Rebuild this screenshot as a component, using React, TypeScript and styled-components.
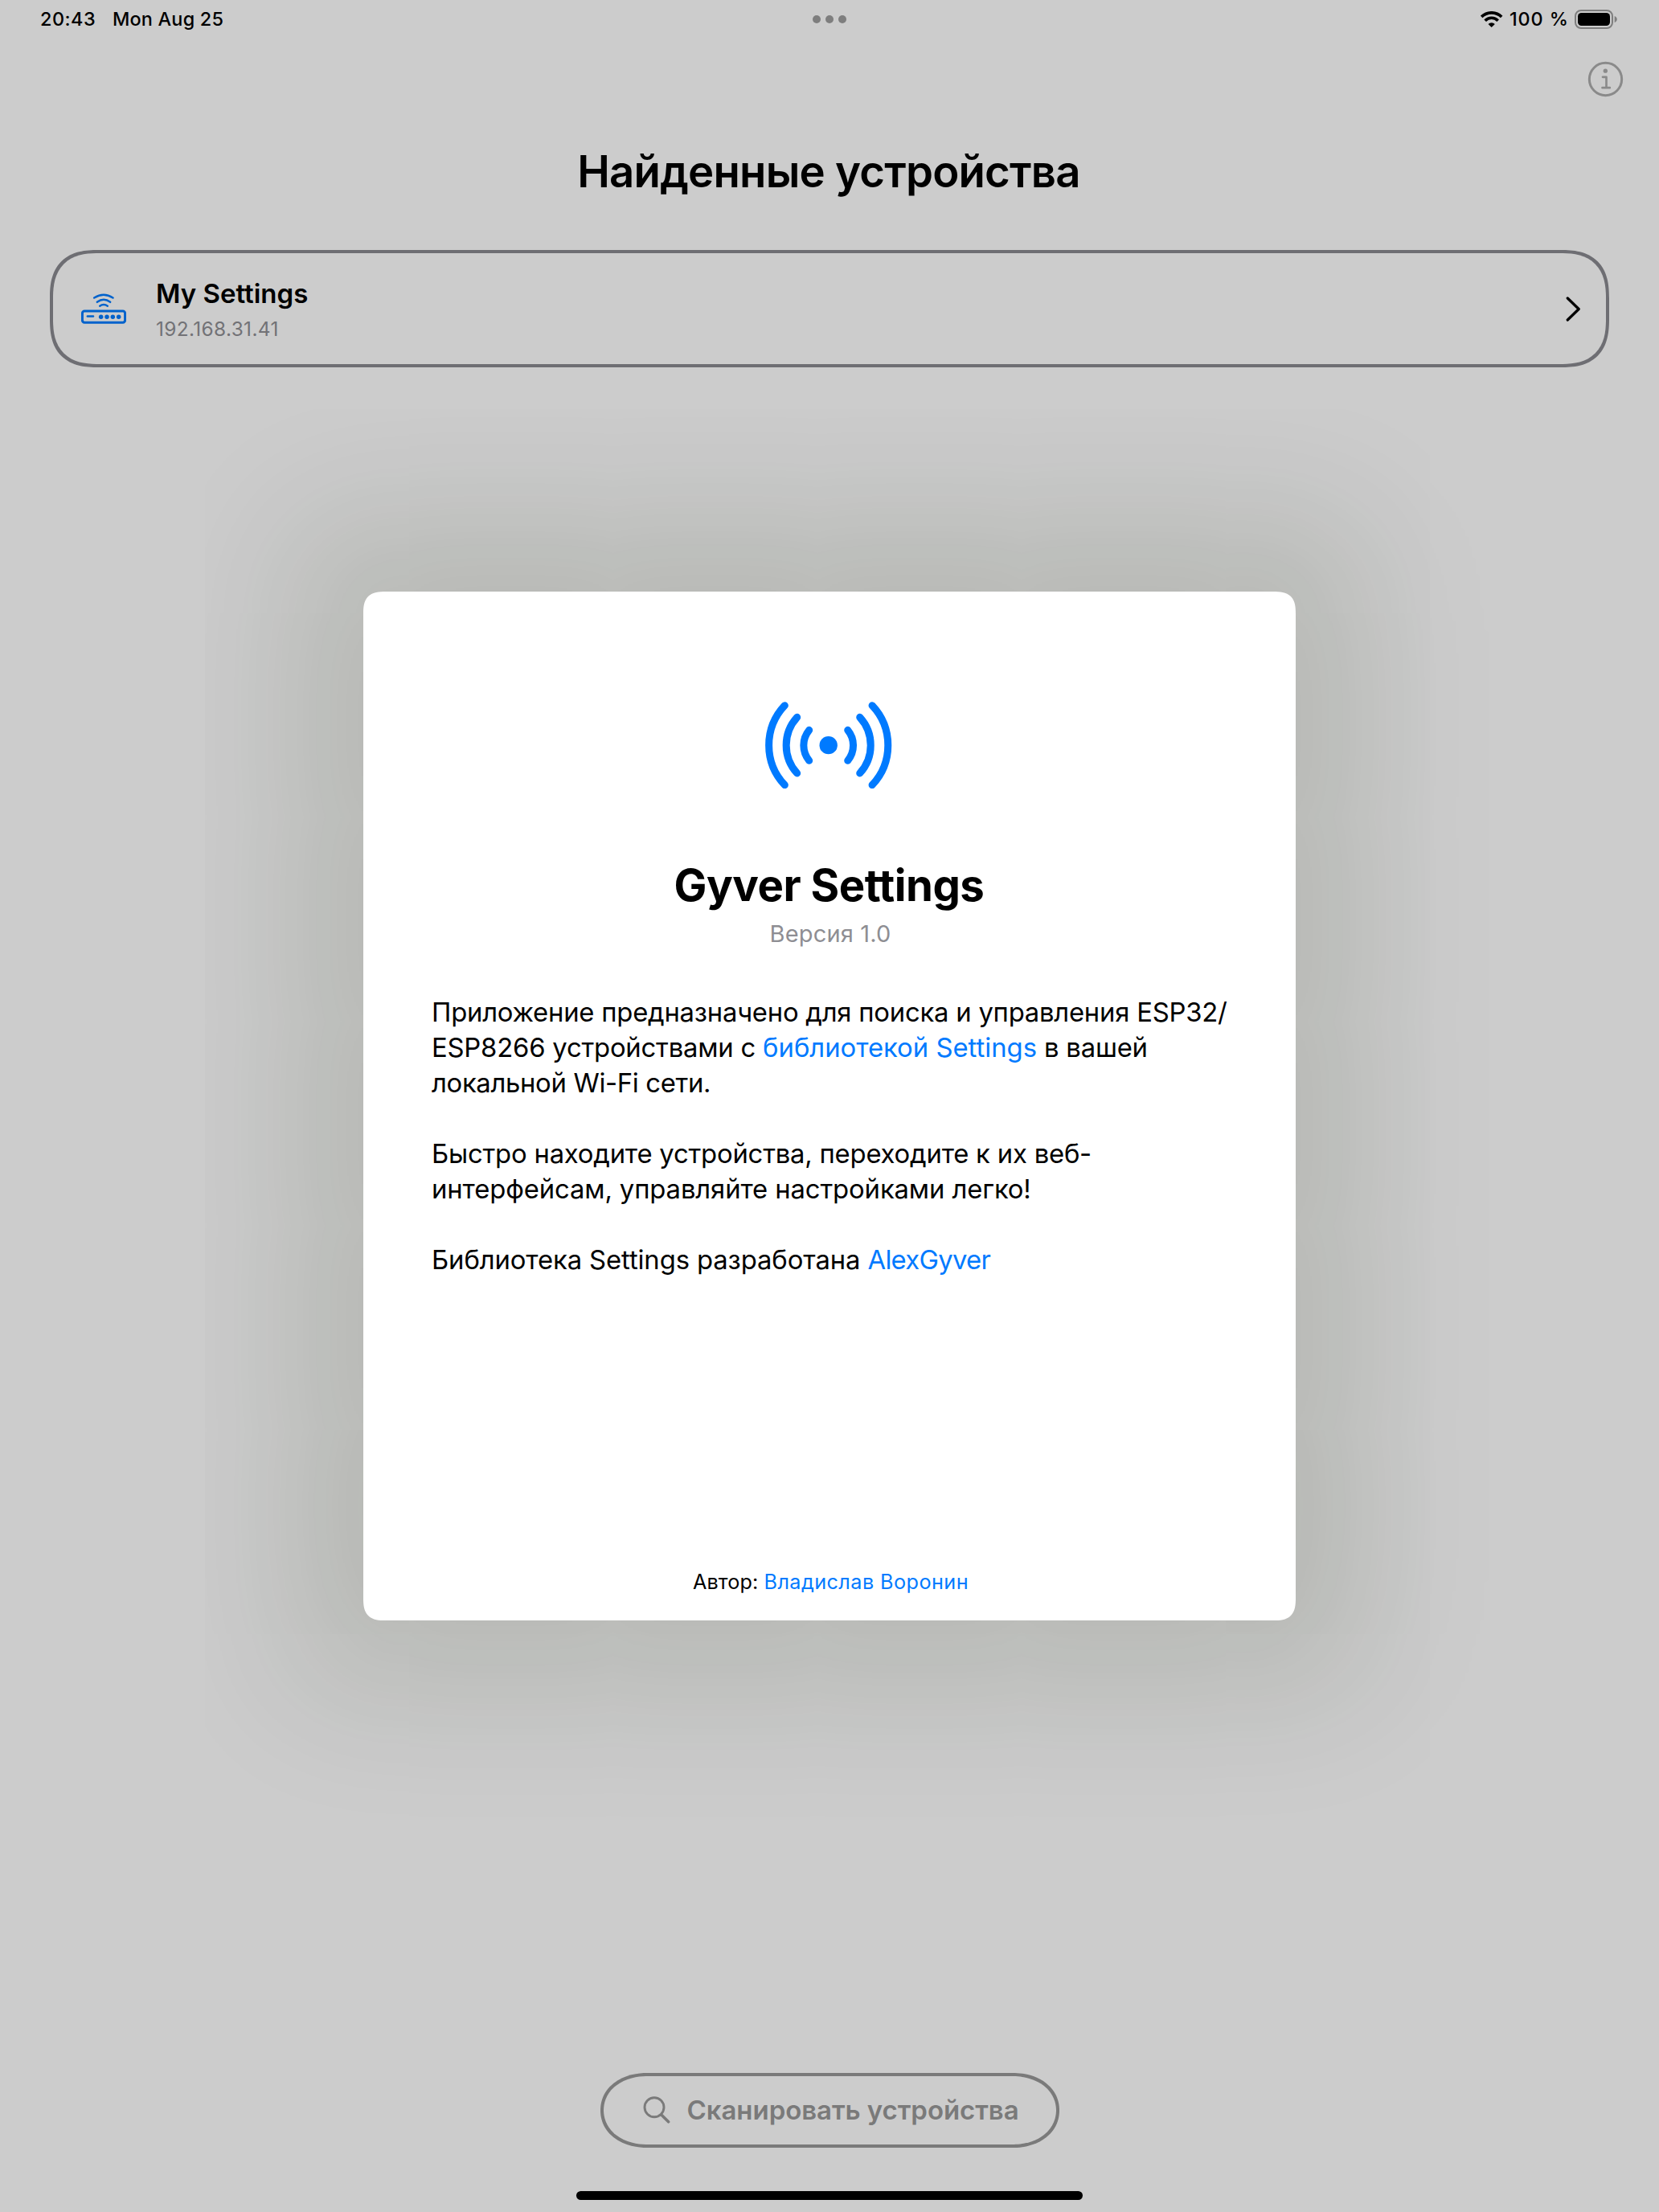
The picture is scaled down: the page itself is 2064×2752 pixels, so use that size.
import React from "react";
import styled, { createGlobalStyle } from "styled-components";

const GlobalStyle = createGlobalStyle`
  *, *::before, *::after { box-sizing: border-box; }
  body {
    margin: 0;
    background: #cccccc;
    font-family: Inter, Roboto, "Liberation Sans", sans-serif;
    color: #000;
  }
`;

const Screen = styled.div`
  position: relative;
  width: 2064px;
  height: 2752px;
  overflow: hidden;
  display: flex;
  flex-direction: column;
  background: #cccccc;
`;

/* ---------- status bar ---------- */

const StatusBar = styled.div`
  display: grid;
  grid-template-columns: 1fr auto 1fr;
  align-items: center;
  height: 48px;
  padding: 0 52px 0 50px;
  font-size: 23.4px;
  font-weight: 500;
  line-height: 30px;
`;

const StatusGroup = styled.div<{ $align: "start" | "end" }>`
  display: flex;
  align-items: center;
  justify-content: flex-${(p) => p.$align};
`;

const StatusText = styled.span<{ $width: number; $spacing: number }>`
  width: ${(p) => p.$width}px;
  letter-spacing: ${(p) => p.$spacing}px;
  white-space: nowrap;
`;

const WifiGlyph = styled.svg`
  width: 28px;
  height: 20px;
  margin-right: 8px;
`;

const BatteryGlyph = styled.svg`
  width: 53px;
  height: 24px;
`;

const MultitaskDots = styled.div`
  display: flex;
  gap: 6px;
  margin-left: 2px;
`;

const Dot = styled.i`
  width: 10px;
  height: 10px;
  border-radius: 50%;
  background: #7e7e7e;
`;

/* ---------- page ---------- */

const NavBar = styled.header`
  display: flex;
  justify-content: flex-end;
  height: 132px;
  padding: 28px 44px 0 0;
`;

const InfoButton = styled.button`
  display: flex;
  width: 45px;
  height: 45px;
  padding: 0;
  border: 0;
  background: none;
`;

const PageTitle = styled.h1`
  margin: 0 2px 65px 0;
  text-align: center;
  font-size: 54.5px;
  font-weight: 600;
  line-height: 66px;
  letter-spacing: -0.79px;
`;

const DeviceCard = styled.section`
  display: flex;
  align-items: center;
  height: 146px;
  margin: 0 62px;
  padding: 0 30px 0 35px;
  border: 4px solid #6e6e73;
  border-radius: 60px;
  corner-shape: superellipse(1.35);
`;

const RouterGlyph = styled.svg`
  width: 56px;
  height: 38px;
  margin-right: 37px;
`;

const DeviceText = styled.div`
  flex: 1;
  display: flex;
  flex-direction: column;
  gap: 7px;
  padding-top: 1px;
`;

const DeviceName = styled.div`
  font-size: 33px;
  font-weight: 600;
  line-height: 42px;
  letter-spacing: 0;
`;

const DeviceAddress = styled.div`
  font-size: 24.4px;
  line-height: 32px;
  letter-spacing: 0.36px;
  color: #727276;
`;

const ChevronGlyph = styled.svg`
  width: 20px;
  height: 32px;
`;

const Footer = styled.footer`
  flex: 1;
  display: flex;
  flex-direction: column;
  align-items: center;
  justify-content: flex-end;
  padding-bottom: 15px;
`;

const ScanButton = styled.button`
  display: flex;
  align-items: center;
  width: 571px;
  height: 93px;
  margin-bottom: 54px;
  padding: 0 0 1px 49px;
  border: 4px solid #7a7a7a;
  border-radius: 58px / 46.5px;
  corner-shape: superellipse(1.08);
  background: none;
  color: #7a7a7a;
  font-family: inherit;
  font-size: 33px;
  font-weight: 600;
  line-height: 42px;
  letter-spacing: -0.06px;
  white-space: nowrap;
`;

const SearchGlyph = styled.svg`
  flex: none;
  width: 34px;
  height: 34px;
  margin-right: 21px;
`;

const HomeIndicator = styled.div`
  width: 630px;
  height: 11px;
  border-radius: 6px;
  background: #000;
`;

/* ---------- about sheet ---------- */

const Overlay = styled.div`
  position: absolute;
  inset: 0;
  display: flex;
  align-items: center;
  justify-content: center;
`;

const Sheet = styled.article`
  display: flex;
  flex-direction: column;
  align-items: center;
  width: 1160px;
  height: 1280px;
  padding: 137px 82px 32px 85px;
  border-radius: 28px;
  corner-shape: superellipse(1.5);
  background: #fff;
  box-shadow: 0 0 180px 82px rgba(20, 37, 0, 0.125);
`;

const RadioGlyph = styled.svg`
  width: 157.4px;
  height: 108.4px;
  margin: 0 5px 86.6px 0;
`;

const SheetTitle = styled.h2`
  margin: 0 4px 10px 0;
  font-size: 54.5px;
  font-weight: 700;
  line-height: 66px;
  letter-spacing: -0.5px;
`;

const Version = styled.p`
  margin: 0 1px 57px 0;
  font-size: 29px;
  line-height: 36px;
  letter-spacing: 0.17px;
  color: #8e8e93;
`;

const Description = styled.div`
  align-self: stretch;
  display: flex;
  flex-direction: column;
  gap: 44px;
  font-size: 32.8px;
  line-height: 44px;
  white-space: nowrap;
`;

const Paragraph = styled.p`
  margin: 0;
`;

const Line = styled.span<{ $spacing: number }>`
  display: block;
  letter-spacing: ${(p) => p.$spacing}px;
`;

const Link = styled.a<{ $spacing: number }>`
  color: #007aff;
  letter-spacing: ${(p) => p.$spacing}px;
`;

const Author = styled.p`
  margin: auto 0 0;
  font-size: 25.2px;
  line-height: 32px;
  letter-spacing: 0.1px;
`;

function Wifi() {
  return (
    <WifiGlyph viewBox="175 42 84 60" fill="none" stroke="#000" strokeWidth="11">
      <path d="M178.5 63 A53 53 0 0 1 253.5 63" />
      <path d="M192 77 A33.5 33.5 0 0 1 240 77" />
      <path d="M216 102 L203.5 90 A17.5 17.5 0 0 1 228.5 90 Z" fill="#000" stroke="none" />
    </WifiGlyph>
  );
}

function Battery() {
  return (
    <BatteryGlyph viewBox="0 0 53 24" fill="none">
      <rect x="1" y="1" width="46" height="22" rx="7" stroke="#7e7e7e" strokeWidth="2" />
      <rect x="4" y="4" width="40" height="16" rx="4.5" fill="#000" />
      <path d="M49.7 8 C53.8 9.4 53.8 14.6 49.7 16 Z" fill="#7e7e7e" />
    </BatteryGlyph>
  );
}

function Info() {
  return (
    <svg width="45" height="45" viewBox="573 227.5 135 135" fill="none" stroke="#8a8a8a">
      <circle cx="640.5" cy="295" r="60.5" strokeWidth="9" />
      <circle cx="640" cy="264" r="8" fill="#8a8a8a" stroke="none" />
      <path
        d="M630 287 H643.5 V327 M628.5 327 H656.5"
        strokeWidth="8"
        strokeLinecap="round"
        strokeLinejoin="round"
      />
    </svg>
  );
}

function Router() {
  return (
    <RouterGlyph viewBox="153 196 168 114" fill="none" stroke="#0062cc" strokeLinecap="round">
      <path d="M201.5 212.5 Q237 190 271.5 212.5" strokeWidth="7.4" />
      <path d="M212.5 228.5 Q237 210.5 261.5 228.5" strokeWidth="7.4" />
      <path d="M222.5 243 Q237 233 251.5 243" strokeWidth="7.4" />
      <rect x="157.3" y="262.3" width="159.4" height="42.4" rx="8" strokeWidth="9" />
      <path d="M176.5 281.5 H198" strokeWidth="7.4" />
      {[227, 249, 271, 293].map((cx) => (
        <circle key={cx} cx={cx} cy="283.5" r="8.2" fill="#0062cc" stroke="none" />
      ))}
    </RouterGlyph>
  );
}

function Radio() {
  return (
    <RadioGlyph viewBox="96 99 472 325" fill="none" stroke="#007aff" strokeWidth="27" strokeLinecap="round">
      <path d="M169 113 A216 216 0 0 0 169 410" />
      <path d="M215 157 A155 155 0 0 0 215 366" />
      <path d="M260 205 A89.5 89.5 0 0 0 260 319" />
      <path d="M404 205 A89.5 89.5 0 0 1 404 319" />
      <path d="M449 157 A155 155 0 0 1 449 366" />
      <path d="M495 113 A216 216 0 0 1 495 410" />
      <circle cx="332" cy="261.5" r="33.5" fill="#007aff" stroke="none" />
    </RadioGlyph>
  );
}

export default function App() {
  return (
    <Screen>
      <GlobalStyle />
      <StatusBar>
        <StatusGroup $align="start">
          <StatusText $width={90} $spacing={0.5}>20:43</StatusText>
          <StatusText $width={140} $spacing={0.2}>Mon Aug 25</StatusText>
        </StatusGroup>
        <MultitaskDots>
          <Dot />
          <Dot />
          <Dot />
        </MultitaskDots>
        <StatusGroup $align="end">
          <Wifi />
          <StatusText $width={81} $spacing={0.9}>100 %</StatusText>
          <Battery />
        </StatusGroup>
      </StatusBar>

      <NavBar>
        <InfoButton>
          <Info />
        </InfoButton>
      </NavBar>

      <PageTitle>Найденные устройства</PageTitle>

      <DeviceCard>
        <Router />
        <DeviceText>
          <DeviceName>My Settings</DeviceName>
          <DeviceAddress>192.168.31.41</DeviceAddress>
        </DeviceText>
        <ChevronGlyph viewBox="0 0 20 32" fill="none" stroke="#000" strokeWidth="3.3" strokeLinecap="round" strokeLinejoin="round">
          <path d="M2.3 3 L16.2 16.5 L2.3 30" />
        </ChevronGlyph>
      </DeviceCard>

      <Footer>
        <ScanButton>
          <SearchGlyph viewBox="0 0 34 34" fill="none" stroke="#7a7a7a" strokeLinecap="round">
            <circle cx="14" cy="13.8" r="12" strokeWidth="2.9" />
            <path d="M23 23.3 L31.6 31.8" strokeWidth="3.6" />
          </SearchGlyph>
          Сканировать устройства
        </ScanButton>
        <HomeIndicator />
      </Footer>

      <Overlay>
        <Sheet>
          <Radio />
          <SheetTitle>Gyver Settings</SheetTitle>
          <Version>Версия 1.0</Version>
          <Description>
            <Paragraph>
              <Line $spacing={-0.225}>Приложение предназначено для поиска и управления ESP32/</Line>
              <Line $spacing={-0.2}>
                ESP8266 устройствами с <Link $spacing={0}>библиотекой Settings</Link> в вашей
              </Line>
              <Line $spacing={-0.32}>локальной Wi-Fi сети.</Line>
            </Paragraph>
            <Paragraph>
              <Line $spacing={-0.2}>Быстро находите устройства, переходите к их веб-</Line>
              <Line $spacing={-0.11}>интерфейсам, управляйте настройками легко!</Line>
            </Paragraph>
            <Paragraph>
              <Line $spacing={-0.1}>
                Библиотека Settings разработана <Link $spacing={-0.7}>AlexGyver</Link>
              </Line>
            </Paragraph>
          </Description>
          <Author>
            Автор: <Link $spacing={0.45}>Владислав Воронин</Link>
          </Author>
        </Sheet>
      </Overlay>
    </Screen>
  );
}
